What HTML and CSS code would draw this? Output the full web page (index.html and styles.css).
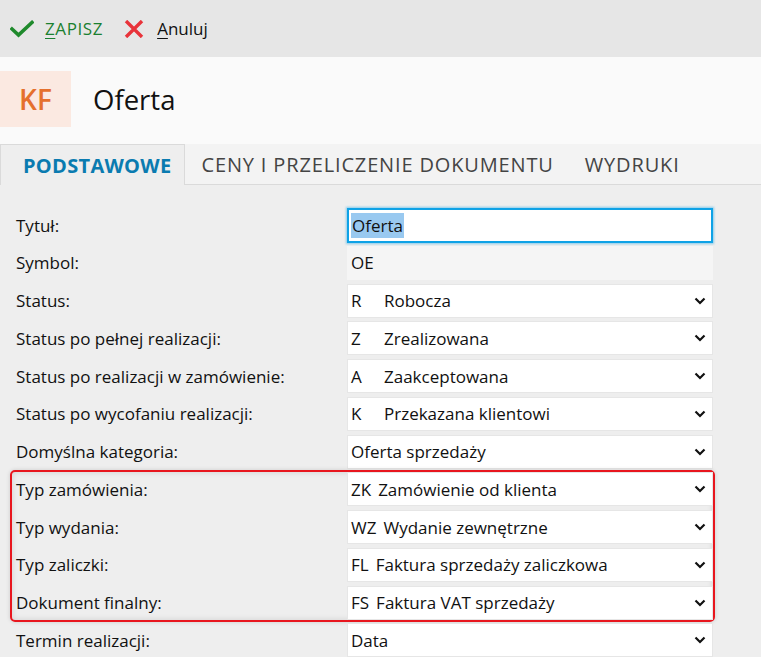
FILE: index.html
```html
<!DOCTYPE html>
<html lang="pl">
<head>
<meta charset="utf-8">
<title>Oferta</title>
<link rel="stylesheet" href="styles.css">
</head>
<body>
<div class="toolbar">
  <div class="tb-btn save">
    <svg class="ico" width="24" height="18" viewBox="0 0 24 18"><path d="M2 9 L8.5 15 L22 2.5" fill="none" stroke="#1f8a2c" stroke-width="3.6" stroke-linecap="square"/></svg>
    <span class="save-text"><u>Z</u>APISZ</span>
  </div>
  <div class="tb-btn cancel">
    <svg class="ico" width="20" height="18" viewBox="0 0 20 18"><path d="M2 1 L18 17 M18 1 L2 17" fill="none" stroke="#e8333a" stroke-width="3.4"/></svg>
    <span><u>A</u>nuluj</span>
  </div>
</div>
<div class="header">
  <div class="badge">KF</div>
  <div class="title">Oferta</div>
</div>
<div class="tabs">
  <div class="tab active">PODSTAWOWE</div>
  <div class="tab">CENY I PRZELICZENIE DOKUMENTU</div>
  <div class="tab">WYDRUKI</div>
</div>
<div class="form">
  <div class="row">
    <div class="label">Tytuł:</div>
    <div class="field input focused"><span class="sel">Oferta</span></div>
  </div>
  <div class="row">
    <div class="label">Symbol:</div>
    <div class="field readonly">OE</div>
  </div>
  <div class="row">
    <div class="label">Status:</div>
    <div class="field select"><span class="code one">R</span><span class="val">Robocza</span><svg class="chev" width="12" height="8" viewBox="0 0 12 8"><path d="M1.5 1.5 L6 6 L10.5 1.5" fill="none" stroke="#111" stroke-width="2.2"/></svg></div>
  </div>
  <div class="row">
    <div class="label">Status po pełnej realizacji:</div>
    <div class="field select"><span class="code one">Z</span><span class="val">Zrealizowana</span><svg class="chev" width="12" height="8" viewBox="0 0 12 8"><path d="M1.5 1.5 L6 6 L10.5 1.5" fill="none" stroke="#111" stroke-width="2.2"/></svg></div>
  </div>
  <div class="row">
    <div class="label">Status po realizacji w zamówienie:</div>
    <div class="field select"><span class="code one">A</span><span class="val">Zaakceptowana</span><svg class="chev" width="12" height="8" viewBox="0 0 12 8"><path d="M1.5 1.5 L6 6 L10.5 1.5" fill="none" stroke="#111" stroke-width="2.2"/></svg></div>
  </div>
  <div class="row">
    <div class="label">Status po wycofaniu realizacji:</div>
    <div class="field select"><span class="code one">K</span><span class="val">Przekazana klientowi</span><svg class="chev" width="12" height="8" viewBox="0 0 12 8"><path d="M1.5 1.5 L6 6 L10.5 1.5" fill="none" stroke="#111" stroke-width="2.2"/></svg></div>
  </div>
  <div class="row">
    <div class="label">Domyślna kategoria:</div>
    <div class="field select"><span class="val">Oferta sprzedaży</span><svg class="chev" width="12" height="8" viewBox="0 0 12 8"><path d="M1.5 1.5 L6 6 L10.5 1.5" fill="none" stroke="#111" stroke-width="2.2"/></svg></div>
  </div>
  <div class="group">
    <div class="row">
      <div class="label">Typ zamówienia:</div>
      <div class="field select"><span class="code">ZK</span><span class="val">Zamówienie od klienta</span><svg class="chev" width="12" height="8" viewBox="0 0 12 8"><path d="M1.5 1.5 L6 6 L10.5 1.5" fill="none" stroke="#111" stroke-width="2.2"/></svg></div>
    </div>
    <div class="row">
      <div class="label">Typ wydania:</div>
      <div class="field select"><span class="code">WZ</span><span class="val">Wydanie zewnętrzne</span><svg class="chev" width="12" height="8" viewBox="0 0 12 8"><path d="M1.5 1.5 L6 6 L10.5 1.5" fill="none" stroke="#111" stroke-width="2.2"/></svg></div>
    </div>
    <div class="row">
      <div class="label">Typ zaliczki:</div>
      <div class="field select"><span class="code">FL</span><span class="val">Faktura sprzedaży zaliczkowa</span><svg class="chev" width="12" height="8" viewBox="0 0 12 8"><path d="M1.5 1.5 L6 6 L10.5 1.5" fill="none" stroke="#111" stroke-width="2.2"/></svg></div>
    </div>
    <div class="row">
      <div class="label">Dokument finalny:</div>
      <div class="field select"><span class="code">FS</span><span class="val">Faktura VAT sprzedaży</span><svg class="chev" width="12" height="8" viewBox="0 0 12 8"><path d="M1.5 1.5 L6 6 L10.5 1.5" fill="none" stroke="#111" stroke-width="2.2"/></svg></div>
    </div>
  </div>
  <div class="row">
    <div class="label">Termin realizacji:</div>
    <div class="field select"><span class="val">Data</span><svg class="chev" width="12" height="8" viewBox="0 0 12 8"><path d="M1.5 1.5 L6 6 L10.5 1.5" fill="none" stroke="#111" stroke-width="2.2"/></svg></div>
  </div>
</div>
</body>
</html>
```
FILE: styles.css
```css
html, body {
  margin: 0;
  padding: 0;
}
body {
  background: #eeeeee;
  font-family: "Open Sans", "Noto Sans", sans-serif;
  color: #111;
  width: 761px;
  height: 657px;
  overflow: hidden;
}
.toolbar {
  height: 57px;
  background: #e6e6e6;
  display: flex;
  align-items: center;
  padding-left: 10px;
  gap: 21px;
  box-sizing: border-box;
}
.tb-btn {
  display: flex;
  align-items: center;
  gap: 11px;
  font-size: 17px;
}
.tb-btn u {
  text-underline-offset: 3px;
}
.save {
  color: #1b8030;
}
.save-text {
  letter-spacing: 0.6px;
}
.cancel {
  color: #111;
  gap: 13px;
}
.header {
  height: 87px;
  background: #fafafa;
  display: flex;
  align-items: center;
  gap: 22px;
  padding-bottom: 3px;
  box-sizing: border-box;
}
.badge {
  width: 71px;
  height: 56px;
  background: #fbe9e1;
  color: #e5702d;
  font-size: 28px;
  font-weight: 600;
  display: flex;
  align-items: center;
  justify-content: center;
}
.title {
  font-size: 27.5px;
  color: #111;
}
.tabs {
  height: 41px;
  background: #f3f3f3;
  border-bottom: 1px solid #dadada;
  display: flex;
  box-sizing: border-box;
}
.tab {
  padding: 0 15px 0 16px;
  display: flex;
  align-items: center;
  font-size: 20px;
  letter-spacing: 0.85px;
  color: #444;
}
.tab.active {
  background: #eeeeee;
  border: 1px solid #dadada;
  border-bottom: none;
  margin-bottom: -1px;
  padding: 0 13px 0 22px;
  color: #0a7bb0;
  font-weight: 700;
  letter-spacing: 0.3px;
}
.form {
  display: flex;
  flex-direction: column;
  gap: 3.75px;
  padding: 23px 0 0 16px;
}
.row {
  display: flex;
  align-items: center;
  height: 34px;
}
.label {
  width: 331px;
  font-size: 17px;
}
.field {
  width: 366px;
  height: 34px;
  box-sizing: border-box;
  display: flex;
  align-items: center;
  padding-left: 4px;
  font-size: 17px;
}
.input {
  background: #fff;
  border: 2px solid #0ea2e6;
  box-shadow: 0 0 2px 1px rgba(14, 162, 230, 0.45);
  padding-left: 2px;
  height: 35px;
}
.sel {
  background: #99c9f0;
  padding: 1px 1px;
}
.readonly {
  background: #f5f5f5;
}
.select {
  background: #fff;
  border: 1px solid #e6e6e6;
  padding-left: 3px;
  padding-right: 6px;
}
.code {
  margin-right: 7px;
}
.code.one {
  min-width: 26px;
}
.chev {
  margin-left: auto;
}
.group {
  display: flex;
  flex-direction: column;
  gap: 3.75px;
  align-self: flex-start;
  margin: -2px 0 -2px -6px;
  padding-left: 4px;
  border: 2px solid #e8161e;
  border-radius: 5px;
  box-shadow: inset 0 0 6px rgba(0, 0, 0, 0.12), 0 0 4px rgba(0, 0, 0, 0.15);
}
```
